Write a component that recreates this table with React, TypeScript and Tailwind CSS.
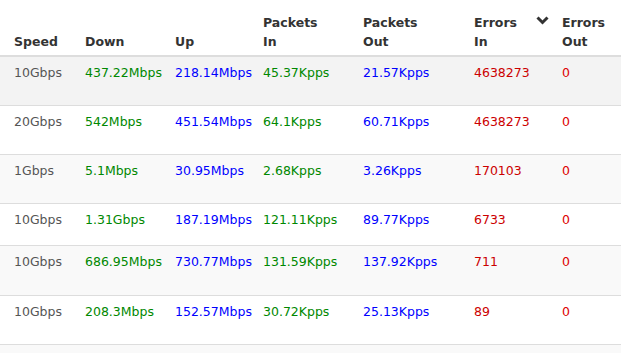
import React from "react";

type Row = {
  speed: string;
  down: string;
  up: string;
  pin: string;
  pout: string;
  ein: string;
  eout: string;
  h: string;
  bg: string;
};

const rows: Row[] = [
  { speed: "10Gbps", down: "437.22Mbps", up: "218.14Mbps", pin: "45.37Kpps", pout: "21.57Kpps", ein: "4638273", eout: "0", h: "h-[49px]", bg: "bg-[#f3f3f3]" },
  { speed: "20Gbps", down: "542Mbps", up: "451.54Mbps", pin: "64.1Kpps", pout: "60.71Kpps", ein: "4638273", eout: "0", h: "h-[49px]", bg: "bg-white" },
  { speed: "1Gbps", down: "5.1Mbps", up: "30.95Mbps", pin: "2.68Kpps", pout: "3.26Kpps", ein: "170103", eout: "0", h: "h-[49px]", bg: "bg-[#f9f9f9]" },
  { speed: "10Gbps", down: "1.31Gbps", up: "187.19Mbps", pin: "121.11Kpps", pout: "89.77Kpps", ein: "6733", eout: "0", h: "h-[42px]", bg: "bg-white" },
  { speed: "10Gbps", down: "686.95Mbps", up: "730.77Mbps", pin: "131.59Kpps", pout: "137.92Kpps", ein: "711", eout: "0", h: "h-[50px]", bg: "bg-[#f9f9f9]" },
  { speed: "10Gbps", down: "208.3Mbps", up: "152.57Mbps", pin: "30.72Kpps", pout: "25.13Kpps", ein: "89", eout: "0", h: "h-[49px]", bg: "bg-white" },
];

export default function App() {
  return (
    <div
      className="w-[621px] h-[353px] overflow-hidden bg-white text-[12.5px] leading-[19px]"
      style={{ fontFamily: '"DejaVu Sans", Verdana, sans-serif' }}
    >
      <table className="w-[621px] table-fixed border-collapse">
        <colgroup>
          <col className="w-[71px]" />
          <col className="w-[90px]" />
          <col className="w-[88px]" />
          <col className="w-[100px]" />
          <col className="w-[111px]" />
          <col className="w-[88px]" />
          <col className="w-[73px]" />
        </colgroup>
        <thead>
          <tr className="h-[56px] border-b-2 border-[#dddddd] text-[#333333] font-bold">
            <th className="pl-[14px] pb-[4px] text-left align-bottom font-bold">Speed</th>
            <th className="pl-[14px] pb-[4px] text-left align-bottom font-bold">Down</th>
            <th className="pl-[14px] pb-[4px] text-left align-bottom font-bold">Up</th>
            <th className="pl-[14px] pb-[4px] text-left align-bottom font-bold">Packets<br />In</th>
            <th className="pl-[14px] pb-[4px] text-left align-bottom font-bold">Packets<br />Out</th>
            <th className="relative pl-[14px] pb-[4px] text-left align-bottom font-bold">
              Errors<br />In
              <svg
                className="absolute right-[-1px] top-[16px]"
                width="13"
                height="9"
                viewBox="0 0 13 9"
              >
                <polyline
                  points="1.5,1.5 6.5,6.5 11.5,1.5"
                  fill="none"
                  stroke="#333333"
                  strokeWidth="3"
                />
              </svg>
            </th>
            <th className="pl-[14px] pb-[4px] text-left align-bottom font-bold">Errors<br />Out</th>
          </tr>
        </thead>
        <tbody>
          {rows.map((r, i) => (
            <tr key={i} className={`${r.h} ${r.bg} border-b border-[#dddddd]`}>
              <td className="pl-[14px] pt-[6px] align-top text-[#555555] whitespace-nowrap">{r.speed}</td>
              <td className="pl-[14px] pt-[6px] align-top text-[#008800] whitespace-nowrap">{r.down}</td>
              <td className="pl-[14px] pt-[6px] align-top text-[#0000ff] whitespace-nowrap">{r.up}</td>
              <td className="pl-[14px] pt-[6px] align-top text-[#008800] whitespace-nowrap">{r.pin}</td>
              <td className="pl-[14px] pt-[6px] align-top text-[#0000ff] whitespace-nowrap">{r.pout}</td>
              <td className="pl-[14px] pt-[6px] align-top text-[#cc0000] whitespace-nowrap">{r.ein}</td>
              <td className="pl-[14px] pt-[6px] align-top text-[#dd0000] whitespace-nowrap">{r.eout}</td>
            </tr>
          ))}
          <tr className="h-[20px] bg-[#f9f9f9]">
            <td colSpan={7}></td>
          </tr>
        </tbody>
      </table>
    </div>
  );
}
